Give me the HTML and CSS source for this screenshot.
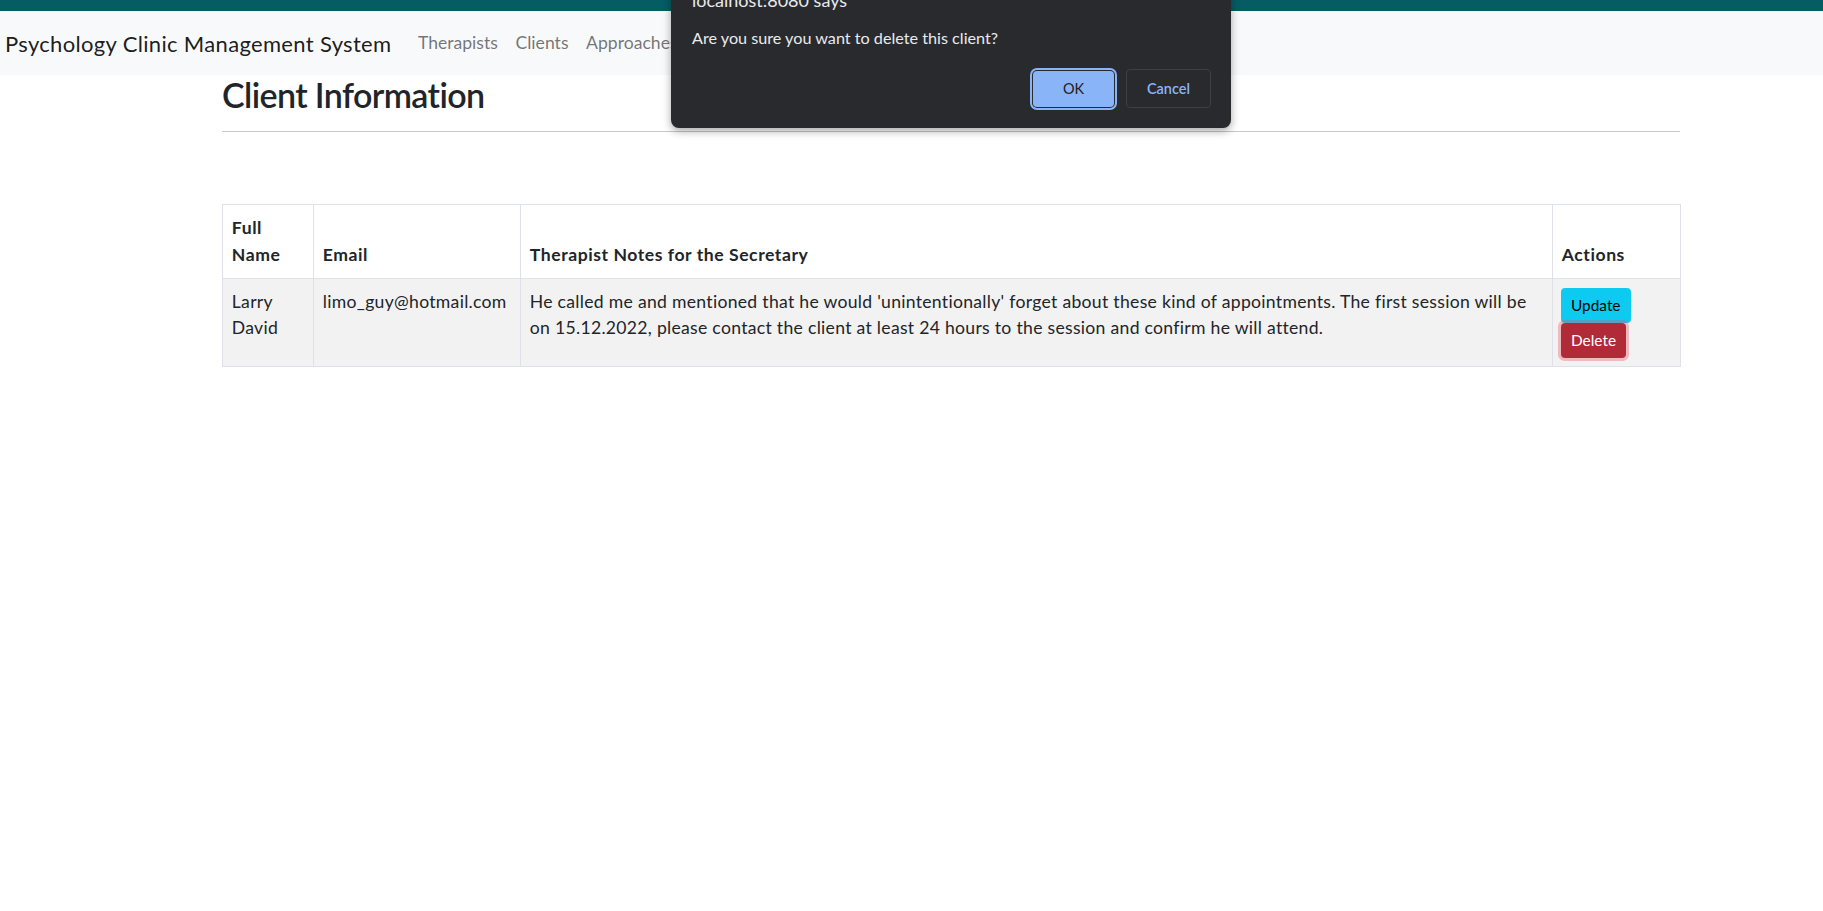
FILE: index.html
```html
<!DOCTYPE html>
<html lang="en">
<head>
<meta charset="utf-8">
<title>Client Information</title>
<link rel="stylesheet" href="styles.css">
</head>
<body>
<div class="topbar"></div>
<nav class="navbar">
  <a class="brand" href="#">Psychology Clinic Management System</a>
  <ul class="nav">
    <li><a class="nav-link" href="#">Therapists</a></li>
    <li><a class="nav-link" href="#">Clients</a></li>
    <li><a class="nav-link" href="#">Approaches</a></li>
  </ul>
</nav>
<main class="container">
  <h2 class="title">Client Information</h2>
  <hr class="divider">
  <table class="table">
    <colgroup>
      <col class="c-name">
      <col class="c-email">
      <col class="c-notes">
      <col class="c-actions">
    </colgroup>
    <thead>
      <tr>
        <th>Full Name</th>
        <th>Email</th>
        <th>Therapist Notes for the Secretary</th>
        <th>Actions</th>
      </tr>
    </thead>
    <tbody>
      <tr class="striped">
        <td>Larry David</td>
        <td>limo_guy@hotmail.com</td>
        <td>He called me and mentioned that he would 'unintentionally' forget about these kind of appointments. The first session will be on 15.12.2022, please contact the client at least 24 hours to the session and confirm he will attend.</td>
        <td class="actions">
          <button class="btn btn-info">Update</button>
          <button class="btn btn-danger">Delete</button>
        </td>
      </tr>
    </tbody>
  </table>
</main>

<div class="dialog">
  <div class="dialog-title">localhost:8080 says</div>
  <div class="dialog-msg">Are you sure you want to delete this client?</div>
  <div class="dialog-buttons">
    <button class="dbtn dbtn-ok">OK</button>
    <button class="dbtn dbtn-cancel">Cancel</button>
  </div>
</div>
</body>
</html>
```

FILE: styles.css
```css
* { box-sizing: border-box; }
html, body { margin: 0; padding: 0; }
body {
  font-family: Lato, "Liberation Sans", sans-serif;
  font-size: 17.6px;
  line-height: 26.4px;
  color: #212529;
  background: #fff;
}
.topbar {
  height: 11px;
  background: #055c62;
}
.navbar {
  height: 64px;
  background: #f8f9fa;
  display: flex;
  align-items: center;
  padding-left: 5px;
}
.brand {
  font-size: 22px;
  line-height: 33px;
  letter-spacing: 0.33px;
  color: rgba(0,0,0,.9);
  text-decoration: none;
  margin-right: 17.6px;
}
.nav {
  list-style: none;
  margin: 0;
  padding: 0;
  display: flex;
}
.nav-link {
  display: block;
  padding: 0 8.8px;
  color: rgba(0,0,0,.55);
  text-decoration: none;
}
.container {
  margin-left: 222px;
  width: 1458px;
}
.title {
  margin: 0;
  font-size: 34px;
  line-height: 40px;
  font-weight: 600;
  letter-spacing: -0.6px;
}
.divider {
  margin: 16px 0 0;
  border: 0;
  border-top: 1px solid #c9c9c9;
}
.table {
  margin-top: 72px;
  width: 100%;
  table-layout: fixed;
  border-collapse: collapse;
}
.c-name { width: 91px; }
.c-email { width: 207px; }
.c-notes { width: 1032px; }
.c-actions { width: 128px; }
.table th, .table td {
  border: 1px solid #dee2e6;
  padding: 10.2px 8.8px;
  text-align: left;
}
.table th {
  vertical-align: bottom;
  font-weight: 700;
  letter-spacing: 0.55px;
}
.table td {
  vertical-align: top;
  padding-top: 9.5px;
  letter-spacing: 0.29px;
}
.striped td { background: #f2f2f2; }
.table td.actions {
  padding: 8.8px 8px 8px;
  letter-spacing: 0;
}
.btn {
  display: block;
  font-family: inherit;
  font-size: 15.4px;
  line-height: 23px;
  padding: 5px 9px;
  border: 1px solid transparent;
  border-radius: 3.5px;
  cursor: pointer;
}
.btn-info {
  background: #0dcaf0;
  border-color: #0dcaf0;
  color: #000;
}
.btn-danger {
  background: #b02a37;
  border-color: #b02a37;
  color: #fff;
  box-shadow: 0 0 0 3px rgba(225,83,97,.35);
}

.dialog {
  position: absolute;
  left: 671px;
  top: -11px;
  width: 560px;
  background: #292a2d;
  border-radius: 0 0 8px 8px;
  box-shadow: 0 3px 8px rgba(0,0,0,.35);
  padding: 0 20px 20px 21px;
  color: #e8eaed;
}
.dialog-title {
  font-size: 18px;
  line-height: 22px;
}
.dialog-msg {
  margin-top: 17px;
  font-size: 16.2px;
  line-height: 20px;
}
.dialog-buttons {
  margin-top: 21px;
  display: flex;
  justify-content: flex-end;
  align-items: center;
  gap: 12px;
}
.dbtn {
  font-family: inherit;
  font-size: 14.5px;
  font-weight: 600;
  border-radius: 4px;
  cursor: pointer;
}
.dbtn-ok {
  width: 81px;
  height: 36px;
  background: #8ab4f8;
  border: 0;
  color: #202124;
  outline: 2px solid #8ab4f8;
  outline-offset: 1px;
  font-weight: 400;
}
.dbtn-cancel {
  width: 85px;
  height: 39px;
  background: transparent;
  border: 1px solid #3c4043;
  color: #8ab4f8;
}
```
